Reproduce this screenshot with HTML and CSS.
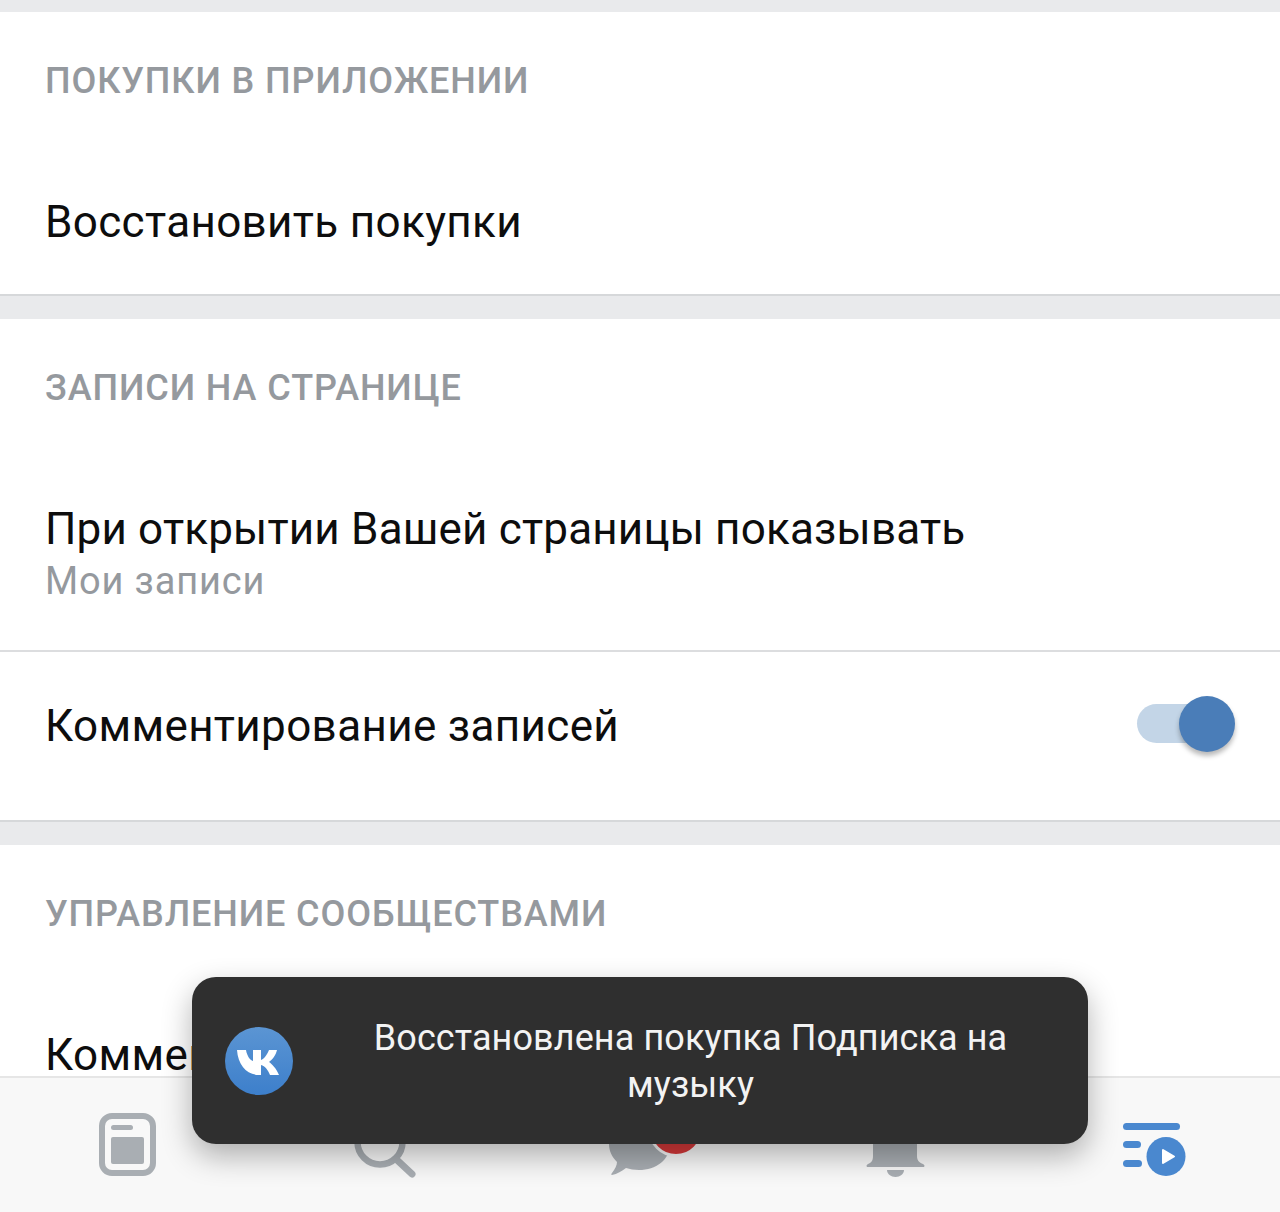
FILE: index.html
```html
<!DOCTYPE html>
<html lang="ru">
<head>
<meta charset="utf-8">
<title>Настройки</title>
<link rel="stylesheet" href="styles.css">
</head>
<body>
<div class="screen">
  <main class="content">
    <section class="card card-purchases">
      <h2 class="label">ПОКУПКИ В ПРИЛОЖЕНИИ</h2>
      <div class="row row-single">Восстановить покупки</div>
    </section>
    <section class="card card-posts">
      <h2 class="label">ЗАПИСИ НА СТРАНИЦЕ</h2>
      <div class="row row-double">
        <div class="row-title">При открытии Вашей страницы показывать</div>
        <div class="row-sub">Мои записи</div>
      </div>
      <div class="row row-toggle">
        <span>Комментирование записей</span>
        <span class="switch"><span class="knob"></span></span>
      </div>
    </section>
    <section class="card card-groups">
      <h2 class="label">УПРАВЛЕНИЕ СООБЩЕСТВАМИ</h2>
      <div class="row row-single">Комментарии</div>
    </section>
  </main>
  <nav class="tabbar">
    <div class="tab">
      <svg class="tab-icon" viewBox="0 0 72 72"><rect x="10" y="8" width="51" height="57" rx="10" fill="none" stroke="#a9aeb3" stroke-width="6"/><rect x="19" y="17" width="22" height="5" rx="2.500" fill="#a9aeb3"/><rect x="19" y="29" width="33" height="27" rx="2" fill="#a9aeb3"/></svg>
    </div>
    <div class="tab">
      <svg class="tab-icon" viewBox="0 0 72 72"><circle cx="32" cy="34" r="22.500" fill="none" stroke="#a9aeb3" stroke-width="6.500"/><path d="M49 52 64 66" fill="none" stroke="#a9aeb3" stroke-width="7" stroke-linecap="round"/></svg>
    </div>
    <div class="tab">
      <svg class="tab-icon" viewBox="0 0 72 72"><path d="M5 36C5 20 18 10 35 10s31 10 31 26-14 26-31 26c-5 0-9-1-13-2-4 3-9 6-14 7-1 0-1-1 0-2 3-4 5-8 5-11C8 49 5 43 5 36Z" fill="#a9aeb3"/></svg>
      <span class="badge"></span>
    </div>
    <div class="tab">
      <svg class="tab-icon" viewBox="0 0 72 72"><path d="M13 36C13 22 22 12 35 12s22 10 22 24v12c0 5 3 7 6 8 2 1 2 3 0 3H8c-2 0-2-2 0-3 3-1 5-3 5-8Z" fill="#a9aeb3"/><path d="M27 62h17c0 4-4 7-8.500 7S27 66 27 62Z" fill="#a9aeb3"/></svg>
    </div>
    <div class="tab">
      <svg class="tab-icon" viewBox="0 0 72 72"><rect x="7" y="15" width="57" height="7" rx="3.500" fill="#4a88cf"/><rect x="7" y="33" width="18" height="7" rx="3.500" fill="#4a88cf"/><rect x="7" y="52" width="19" height="7" rx="3.500" fill="#4a88cf"/><circle cx="50" cy="48.500" r="19.500" fill="#4a88cf"/><path d="M47 42v13l11-6.500Z" fill="#fff" stroke="#fff" stroke-width="2" stroke-linejoin="round"/></svg>
    </div>
  </nav>
  <div class="toast">
    <svg class="toast-logo" viewBox="0 0 68 68">
      <defs><linearGradient id="vkfill" x1="0" y1="0" x2="0" y2="1"><stop offset="0" stop-color="#5b95d3"/><stop offset="1" stop-color="#3d7fcb"/></linearGradient></defs>
      <circle cx="34" cy="34" r="34" fill="url(#vkfill)"/>
      <path d="M12 23h9c1 6 4 10 7 11V23h8v10c3-1 6-5 8-10h8c-1 5-5 10-8 12 3 2 7 6 10 13h-9c-2-5-5-9-9-10v10h-2C22 48 13 38 12 23Z" fill="#fff"/>
    </svg>
    <div class="toast-text">Восстановлена покупка Подписка на музыку</div>
  </div>
</div>
</body>
</html>
```
FILE: styles.css
```css
* { box-sizing: border-box; }
html, body { margin: 0; padding: 0; }
body { background: #e9eaec; font-family: Roboto, "Noto Sans", sans-serif; color: #0d0d0d; }
.screen { position: relative; width: 1280px; height: 1212px; overflow: hidden; display: flex; flex-direction: column; background: #e9eaec; }
.content { flex: 1; min-height: 0; overflow: hidden; padding-top: 12px; display: flex; flex-direction: column; gap: 23px; }
.card { background: #fff; flex: none; border-bottom: 2px solid #d6d8da; }
.card-purchases { height: 284px; }
.card-posts { height: 503px; }
.card-groups { height: 300px; border-bottom: 0; }
.label { margin: 0; height: 136px; padding: 47px 45px 0; font-size: 36px; line-height: 44px; font-weight: 500; letter-spacing: .9px; color: #95999e; white-space: nowrap; }
.row { padding: 0 45px; font-size: 44px; letter-spacing: .35px; white-space: nowrap; }
.row-single { line-height: 52px; padding-top: 48px; height: 145px; }
.row-double { height: 197px; padding-top: 48px; border-bottom: 2px solid #dcdddf; }
.row-title { line-height: 52px; letter-spacing: .18px; }
.row-sub { font-size: 38px; line-height: 52px; letter-spacing: .85px; color: #95999e; }
.row-toggle { display: flex; align-items: center; justify-content: space-between; height: 150px; padding-right: 45px; padding-bottom: 2px; }
.switch { position: relative; display: block; width: 95px; height: 39px; margin-right: 3px; margin-bottom: 6px; border-radius: 20px; background: #c3d5e7; }
.knob { position: absolute; right: -3px; top: -8px; width: 56px; height: 56px; border-radius: 50%; background: #4a7db8; box-shadow: 0 4px 5px rgba(0,0,0,.28); }
.tabbar { flex: none; height: 136px; background: #f8f8f8; border-top: 2px solid #e6e6e6; display: flex; position: relative; }
.tab { position: relative; flex: 1; display: flex; align-items: center; justify-content: center; padding-bottom: 2px; }
.tab-icon { width: 72px; height: 72px; display: block; }
.badge { position: absolute; left: 136px; top: 23px; width: 56px; height: 56px; border-radius: 50%; background: #d6393a; border: 3px solid #f8f8f8; }
.toast { position: absolute; left: 192px; top: 977px; width: 896px; height: 167px; border-radius: 24px; background: #2f2f2f; box-shadow: 0 12px 30px rgba(0,0,0,.3); display: flex; align-items: center; padding-left: 33px; }
.toast-logo { flex: none; width: 68px; height: 68px; display: block; }
.toast-text { flex: 1; padding: 2px 40px 0; text-align: center; color: #f3f3f3; font-size: 36px; line-height: 47px; letter-spacing: .1px; }
```
